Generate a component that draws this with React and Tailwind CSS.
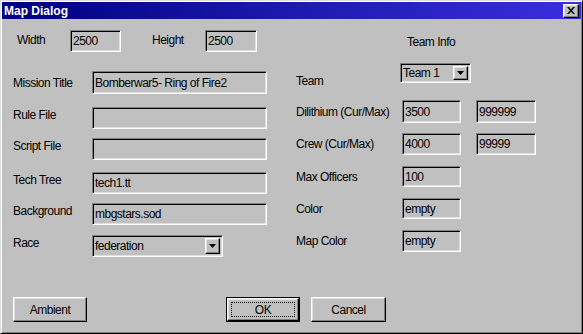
import React from "react";

const FONT = { fontFamily: '"Liberation Sans", Arial, sans-serif' };

const sunken =
  "border border-t-[#808080] border-l-[#808080] border-b-white border-r-white shadow-[inset_1px_1px_0_#000,inset_-1px_-1px_0_#dfdfdf] bg-[#c0c0c0]";
const raised =
  "border border-t-white border-l-white border-b-black border-r-black shadow-[inset_-1px_-1px_0_#808080,inset_1px_1px_0_#dfdfdf] bg-[#c0c0c0]";
const txt = "text-[12px] tracking-[-0.5px] text-black";

function Field({ w, h = "h-[22px]", value = "", extra = "" }) {
  return (
    <div className={`${sunken} ${w} ${h} ${extra} flex items-center pl-[2px] ${txt} overflow-hidden whitespace-nowrap`}>
      {value}
    </div>
  );
}

function Arrow() {
  return (
    <svg width="7" height="4" viewBox="0 0 7 4">
      <path d="M0 0h7L3.5 4z" fill="#000" />
    </svg>
  );
}

function Combo({ w, h, value }) {
  return (
    <div className={`${sunken} ${w} ${h} flex items-stretch p-[2px]`}>
      <div className={`flex-1 flex items-center ${txt} whitespace-nowrap`}>{value}</div>
      <div className={`${raised} w-[15px] flex items-center justify-center`}>
        <Arrow />
      </div>
    </div>
  );
}

function Button({ label, def = false }) {
  if (def) {
    return (
      <div className="w-[74px] h-[25px] border border-black flex">
        <div className={`${raised} flex-1 flex p-[3px]`}>
          <div className={`flex-1 border border-dotted border-black flex items-center justify-center ${txt}`}>
            {label}
          </div>
        </div>
      </div>
    );
  }
  return (
    <div className={`${raised} h-[25px] flex items-center justify-center ${txt}`}>{label}</div>
  );
}

function LeftRow({ label, children, mt, h, lift = "mb-[6px]" }) {
  return (
    <div className={`flex items-center ${mt} ${h}`}>
      <div className={`w-[79px] ${txt} ${lift}`}>{label}</div>
      {children}
    </div>
  );
}

function RightRow({ label, children, mt, h, lift = "" }) {
  return (
    <div className={`flex items-center ${mt} ${h}`}>
      <div className={`w-[106px] ${txt} whitespace-nowrap ${lift}`}>{label}</div>
      {children}
    </div>
  );
}

export default function App() {
  return (
    <div
      style={FONT}
      className="w-[583px] h-[334px] bg-[#c0c0c0] border border-t-[#dfdfdf] border-l-[#dfdfdf] border-b-black border-r-black shadow-[inset_1px_1px_0_#fff,inset_-1px_-1px_0_#808080] p-[1px] flex flex-col"
    >
      {/* Title bar */}
      <div className="h-[17px] bg-gradient-to-r from-[#000080] to-[#3a2ee0] flex items-center justify-between pl-[2px] pr-[2px]">
        <span className="text-white font-bold text-[12px] leading-none">Map Dialog</span>
        <div className={`${raised} w-[16px] h-[14px] flex items-center justify-center`}>
          <svg width="8" height="7" viewBox="0 0 8 7">
            <path d="M0 0h2l2 2.5L6 0h2L5 3.5 8 7H6L4 4.5 2 7H0l3-3.5z" fill="#000" />
          </svg>
        </div>
      </div>

      {/* Row 1 */}
      <div className="flex items-start mt-[11px] h-[22px]">
        <div className={`ml-[15px] w-[53px] mt-[1px] ${txt}`}>Width</div>
        <Field w="w-[51px]" value="2500" />
        <div className={`ml-[31px] w-[53px] mt-[1px] ${txt}`}>Height</div>
        <Field w="w-[52px]" value="2500" />
        <div className={`ml-[150px] mt-[3px] ${txt}`}>Team Info</div>
      </div>

      {/* Columns */}
      <div className="flex items-start mt-[11px]">
        {/* Left column */}
        <div className="ml-[11px] w-[254px] flex flex-col mt-[8px]">
          <LeftRow label="Mission Title" mt="" h="h-[23px]" lift="">
            <Field w="w-[175px]" h="h-[23px]" value="Bomberwar5- Ring of Fire2" />
          </LeftRow>
          <LeftRow label="Rule File" mt="mt-[13px]" h="h-[22px]">
            <Field w="w-[175px]" />
          </LeftRow>
          <LeftRow label="Script File" mt="mt-[9px]" h="h-[22px]">
            <Field w="w-[175px]" />
          </LeftRow>
          <LeftRow label="Tech Tree" mt="mt-[12px]" h="h-[22px]">
            <Field w="w-[175px]" value="tech1.tt" />
          </LeftRow>
          <LeftRow label="Background" mt="mt-[9px]" h="h-[22px]">
            <Field w="w-[175px]" value="mbgstars.sod" />
          </LeftRow>
          <LeftRow label="Race" mt="mt-[10px]" h="h-[22px]">
            <Combo w="w-[131px]" h="h-[22px]" value="federation" />
          </LeftRow>
        </div>

        {/* Right column */}
        <div className="ml-[29px] flex flex-col">
          <div className="flex items-start h-[20px]">
            <div className={`w-[104px] mt-[9px] ${txt}`}>Team</div>
            <Combo w="w-[71px]" h="h-[20px]" value="Team 1" />
          </div>
          <RightRow label="Dilithium (Cur/Max)" mt="mt-[17px]" h="h-[23px]">
            <Field w="w-[59px]" h="h-[23px]" value="3500" />
            <Field w="w-[60px]" h="h-[23px]" value="999999" extra="ml-[15px]" />
          </RightRow>
          <RightRow label="Crew (Cur/Max)" mt="mt-[10px]" h="h-[22px]">
            <Field w="w-[59px]" value="4000" />
            <Field w="w-[60px]" value="99999" extra="ml-[15px]" />
          </RightRow>
          <RightRow label="Max Officers" mt="mt-[11px]" h="h-[21px]">
            <Field w="w-[59px]" h="h-[21px]" value="100" />
          </RightRow>
          <RightRow label="Color" mt="mt-[11px]" h="h-[21px]">
            <Field w="w-[59px]" h="h-[21px]" value="empty" />
          </RightRow>
          <RightRow label="Map Color" mt="mt-[11px]" h="h-[22px]">
            <Field w="w-[59px]" value="empty" />
          </RightRow>
        </div>
      </div>

      {/* Buttons */}
      <div className="mt-auto mb-[10px] flex items-start">
        <div className="ml-[11px] w-[74px]">
          <Button label="Ambient" />
        </div>
        <div className="ml-[139px]">
          <Button label="OK" def />
        </div>
        <div className="ml-[11px] w-[75px]">
          <Button label="Cancel" />
        </div>
      </div>
    </div>
  );
}
